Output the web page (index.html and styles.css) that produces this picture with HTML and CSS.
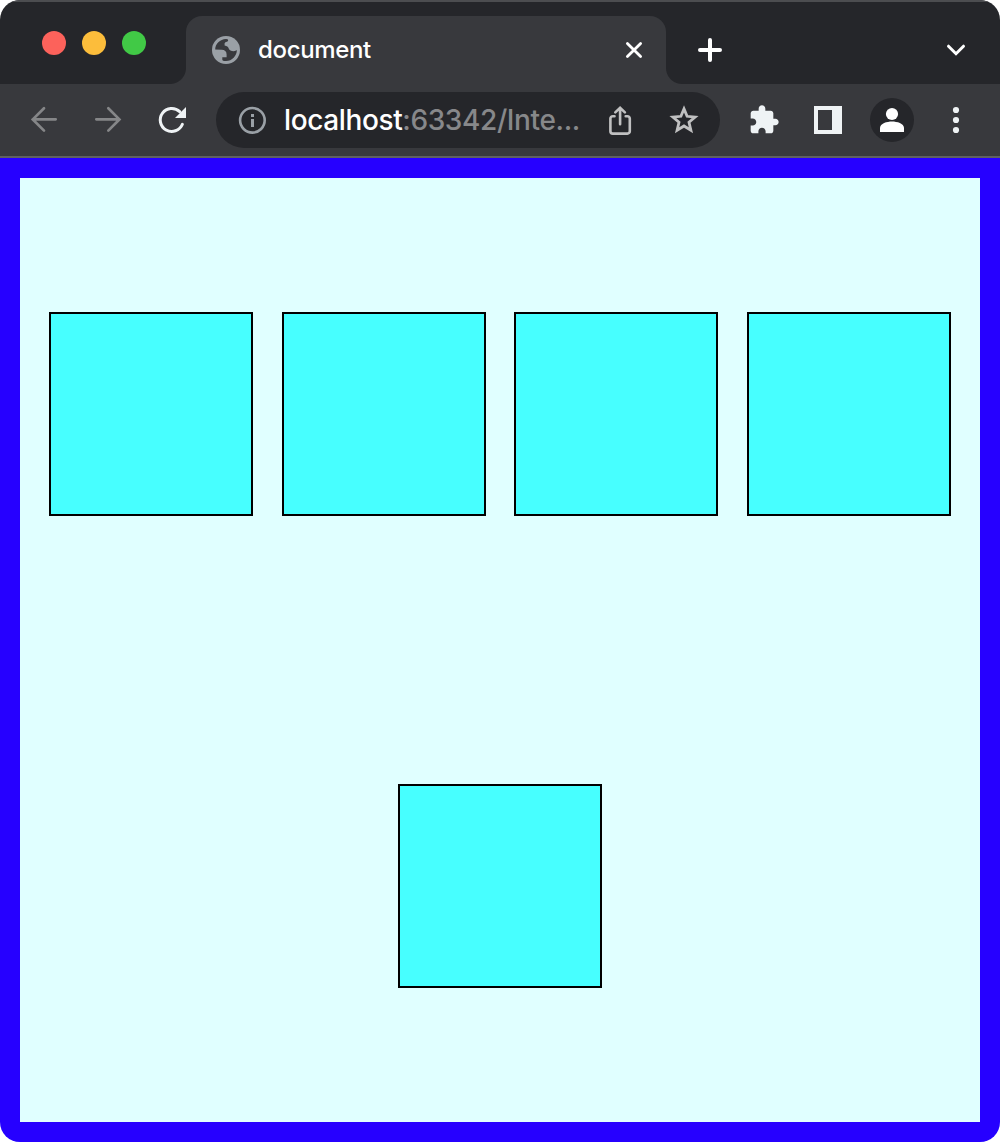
FILE: index.html
```html
<!DOCTYPE html>
<html lang="en">
<head>
<meta charset="utf-8">
<title>document</title>
<link rel="stylesheet" href="styles.css">
</head>
<body>
<div class="window">
  <header class="tabstrip">
    <div class="lights">
      <span class="light light-close"></span>
      <span class="light light-min"></span>
      <span class="light light-max"></span>
    </div>
    <div class="tab">
      <svg class="favicon" viewBox="0 0 28 28" width="28" height="28">
        <circle cx="14" cy="14" r="14" fill="#9aa0a6"/>
        <path d="M3.2 13.6C3.2 8.2 8 3.2 14 3.1C16.4 3.2 16.5 4.2 15.8 5.2C14.8 6 13 5.8 12.6 7.2V9.4C15 9.8 16.2 10.6 16.6 12.2C17 14.2 19.4 15.2 21.6 15.2C23 15.2 24 14.6 24.9 14C24.8 20 20 25 14 25C11.5 25 10.3 24.5 10.3 23.4V21.2H14.6V18.4C14.6 15.2 12.6 13.7 9.8 13.7Z" fill="#38393d"/>
      </svg>
      <span class="tab-title">document</span>
      <svg class="tab-close" viewBox="0 0 20 20" width="20" height="20"><path d="M3.4 3.400L16.600 16.600M16.600 3.400L3.400 16.600"/></svg>
    </div>
    <svg class="new-tab" viewBox="0 0 28 28" width="28" height="28"><path d="M14 4V24M4 14H24"/></svg>
    <svg class="tab-search" viewBox="0 0 24 24" width="24" height="24"><path d="M4.500 8.200L12 15.700L19.500 8.200"/></svg>
  </header>
  <nav class="toolbar">
    <span class="button"><svg class="arrow" viewBox="0 0 32 32" width="32" height="32"><path d="M27.700 15.300H4.800M16 4.300L4.800 15.400L16 26.600"/></svg></span>
    <span class="button"><svg class="arrow" viewBox="0 0 32 32" width="32" height="32"><path d="M4.300 15.300H27.200M16.300 4.300L27.400 15.400L16.300 26.600"/></svg></span>
    <span class="button"><svg viewBox="0 0 32 32" width="32" height="32">
      <path d="M26.400 20.300A11.500 11.500 0 1 1 23.700 7.600" fill="none" stroke="#eff3f5" stroke-width="3" stroke-linecap="round"/>
      <path d="M30 3V14H19Z" fill="#eff3f5"/>
    </svg></span>
    <div class="omnibox">
      <svg class="info" viewBox="0 0 28 28" width="28" height="28">
        <circle cx="14.400" cy="14.300" r="12.300" fill="none" stroke="#9aa0a6" stroke-width="2.600"/>
        <path d="M13 8h3v3h-3zM13 13h3v8h-3z" fill="#9aa0a6"/>
      </svg>
      <span class="url"><span class="host">localhost</span>:63342/Inte...</span>
      <span class="button"><svg class="share" viewBox="0 0 32 32" width="32" height="32"><path d="M10.500 12.200H8.800A2.400 2.400 0 0 0 6.400 14.600V27.200A2.400 2.400 0 0 0 8.800 29.600H23.400A2.400 2.400 0 0 0 25.800 27.200V14.600A2.400 2.400 0 0 0 23.400 12.200H21.700M16.100 20.200V4M11.300 8.400L16.100 3.700L20.900 8.400"/></svg></span>
      <span class="button"><svg class="star" viewBox="0 0 36 36" width="36" height="36"><path d="M18 6.900L21.100 14.300L29.100 15L23 20.200L24.900 28.200L18 24L11.100 28.200L13 20.200L6.900 15L14.900 14.300Z"/></svg></span>
    </div>
    <span class="button"><svg viewBox="0 0 24 24" width="32" height="32" fill="#eff3f5"><path d="M20.500 11H19V7c0-1.100-.9-2-2-2h-4V3.500C13 2.120 11.880 1 10.500 1S8 2.120 8 3.500V5H4c-1.100 0-1.990.9-1.990 2v3.800H3.500c1.490 0 2.700 1.210 2.700 2.700s-1.210 2.700-2.700 2.700H2V20c0 1.100.9 2 2 2h3.800v-1.500c0-1.490 1.210-2.700 2.700-2.700 1.490 0 2.700 1.210 2.700 2.700V22H17c1.100 0 2-.9 2-2v-4h1.500c1.380 0 2.500-1.120 2.500-2.500S21.880 11 20.500 11z"/></svg></span>
    <span class="button"><svg viewBox="0 0 28 28" width="28" height="28"><path d="M0 0H28V28H0ZM4 4V24H18V4Z" fill="#eff3f5" fill-rule="evenodd"/></svg></span>
    <span class="button"><svg viewBox="0 0 44 44" width="44" height="44">
      <circle cx="22" cy="22" r="22" fill="#25262a"/>
      <circle cx="22" cy="16" r="6.100" fill="#fff"/>
      <path d="M10 34V30C10 25.500 17 23.500 22 23.500S34 25.500 34 30V34Z" fill="#fff"/>
    </svg></span>
    <span class="button"><svg viewBox="0 0 8 28" width="8" height="28" fill="#eff3f5"><circle cx="4" cy="4" r="3.100"/><circle cx="4" cy="14" r="3.100"/><circle cx="4" cy="24" r="3.100"/></svg></span>
  </nav>
  <main class="page">
    <div class="box"></div>
    <div class="box"></div>
    <div class="box"></div>
    <div class="box"></div>
    <div class="box"></div>
  </main>
</div>
</body>
</html>
```
FILE: styles.css
```css
* { box-sizing: border-box; }

body {
  margin: 0;
  background: #fff;
  font-family: Inter, "Liberation Sans", sans-serif;
}

svg { display: block; flex: none; }

.window {
  display: flex;
  flex-direction: column;
  height: 1142px;
  width: 1000px;
  border-radius: 20px;
  overflow: hidden;
}

.tabstrip {
  display: flex;
  height: 84px;
  padding: 14px 32px 0 42px;
  align-items: center;
  background: #25262a;
  border-top: 2px solid #4c4d50;
}

.lights {
  display: flex;
  gap: 16px;
  margin-top: -14px;
}

.light {
  width: 24px;
  height: 24px;
  border-radius: 50%;
}

.light-close { background: #fc625b; }
.light-min { background: #fcbd3b; }
.light-max { background: #41c946; }

.tab {
  position: relative;
  display: flex;
  align-items: center;
  width: 480px;
  height: 68px;
  margin-left: 40px;
  padding: 0 22px 0 26px;
  border-radius: 16px 16px 0 0;
  background: #38393d;
}

.tab::before,
.tab::after {
  content: "";
  position: absolute;
  bottom: 0;
  width: 16px;
  height: 16px;
}

.tab::before {
  right: 100%;
  background: radial-gradient(circle at 0 0, transparent 15.5px, #38393d 16.5px);
}

.tab::after {
  left: 100%;
  background: radial-gradient(circle at 100% 0, transparent 15.5px, #38393d 16.5px);
}

.tab-title {
  flex: 1;
  margin-left: 18px;
  color: #fff;
  font-size: 24px;
  font-weight: 500;
  letter-spacing: -0.35px;
  line-height: 28px;
}

.tab-close,
.new-tab,
.tab-search {
  fill: none;
  stroke: #fff;
  stroke-width: 2.8;
  stroke-linecap: round;
}

.new-tab {
  margin-left: 30px;
  stroke-width: 4;
}

.tab-search {
  margin-left: auto;
  stroke-width: 3;
}

.toolbar {
  display: flex;
  height: 74px;
  padding: 0 12px;
  align-items: center;
  background: #38393d;
  border-bottom: 2px solid #5f6062;
}

.button {
  display: flex;
  flex: none;
  width: 64px;
  height: 56px;
  align-items: center;
  justify-content: center;
}

.arrow {
  fill: none;
  stroke: #858688;
  stroke-width: 2.7;
  stroke-linecap: round;
}

.omnibox {
  display: flex;
  flex: 1;
  height: 56px;
  margin: 0 12px;
  padding: 0 4px 0 22px;
  align-items: center;
  border-radius: 28px;
  background: #25262a;
}

.url {
  flex: 1;
  margin-left: 18px;
  color: #87888a;
  font-size: 28px;
  font-weight: 500;
  letter-spacing: -0.38px;
  line-height: 34px;
  white-space: nowrap;
}

.host { color: #fff; }

.share,
.star {
  fill: none;
  stroke: #c0c0c1;
  stroke-width: 2.6;
}

.share { stroke-linecap: round; }
.star { stroke-width: 2.8; }

.page {
  display: flex;
  flex: 1;
  flex-wrap: wrap;
  align-items: center;
  justify-content: space-evenly;
  border: 20px solid #2600ff;
  background: #e0ffff;
}

.box {
  width: 204px;
  height: 204px;
  border: 2px solid #000;
  background: #47ffff;
}
```
